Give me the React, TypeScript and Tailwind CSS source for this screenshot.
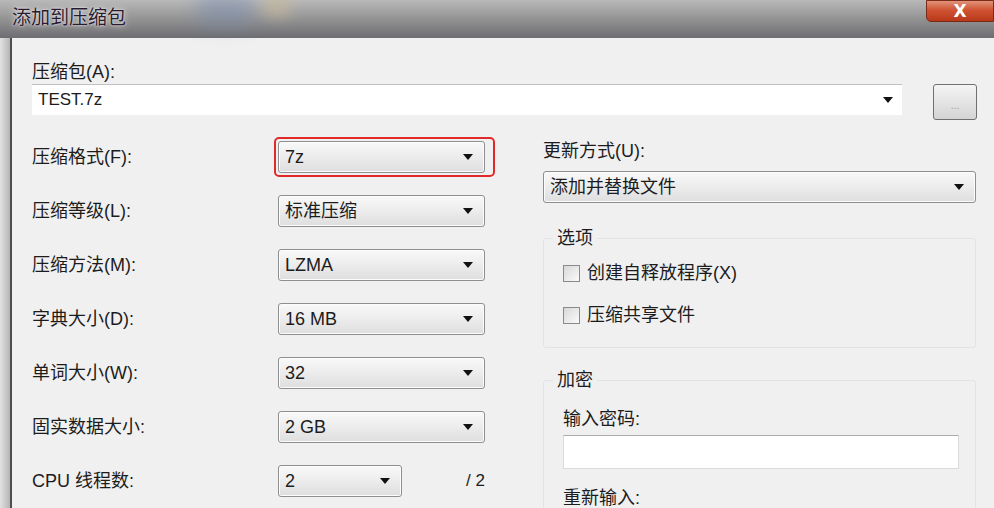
import React from "react";

const font = { fontFamily: '"Liberation Sans", "Noto Sans CJK SC", sans-serif' };

const Arrow = () => (
  <svg width="10" height="6" viewBox="0 0 10 6" className="shrink-0">
    <path d="M0 0h10L5 6z" fill="#111" />
  </svg>
);

const Select = ({
  value,
  className = "",
}: {
  value: string;
  className?: string;
}) => (
  <div
    className={`flex h-[32px] items-center justify-between rounded-[3px] border border-[#8d8f91] bg-[linear-gradient(#f9f9f9,#ececec_50%,#dedede)] pl-[6px] pr-[11px] text-[18px] text-[#1c1c1c] shadow-[inset_0_0_0_1px_#fcfcfc] ${className}`}
  >
    <span>{value}</span>
    <Arrow />
  </div>
);

const Checkbox = ({ label }: { label: string }) => (
  <label className="flex h-[42px] items-center gap-[7px] text-[18px] text-[#1c1c1c]">
    <span className="h-[17px] w-[17px] border border-[#8a8a8a] bg-[linear-gradient(135deg,#d8d8d8,#fafafa)]" />
    {label}
  </label>
);

const rows: Array<{ label: string; value: string; narrow?: boolean }> = [
  { label: "压缩格式(F):", value: "7z" },
  { label: "压缩等级(L):", value: "标准压缩" },
  { label: "压缩方法(M):", value: "LZMA" },
  { label: "字典大小(D):", value: "16 MB" },
  { label: "单词大小(W):", value: "32" },
  { label: "固实数据大小:", value: "2 GB" },
  { label: "CPU 线程数:", value: "2", narrow: true },
];

export default function App() {
  return (
    <div
      className="flex h-[508px] w-[994px] flex-col overflow-hidden bg-[#c4c6c8]"
      style={font}
    >
      {/* title bar */}
      <div className="relative flex h-[38px] shrink-0 items-center bg-[linear-gradient(#b9b9b9,#8f8f90_55%,#6d6d72)] pb-[2px] pl-[12px]">
        <span className="pointer-events-none absolute left-[195px] top-[-8px] h-[34px] w-[60px] rounded-full bg-[#6d86b0] opacity-40 blur-[10px]" />
        <span className="pointer-events-none absolute left-[262px] top-[-6px] h-[24px] w-[30px] rounded-full bg-[#cdbb96] opacity-50 blur-[7px]" />
        <span className="relative text-[19px] text-[#2a1a30] [text-shadow:0_0_6px_#e8e8e8,0_0_2px_#ffffff]">
          添加到压缩包
        </span>
        <div className="absolute right-0 top-0 flex h-[22px] w-[68px] items-center justify-center rounded-bl-[5px] border border-[#7c2a18] bg-[linear-gradient(#e29379,#cf5434_45%,#b83818)]">
          <span className="text-[17px] font-bold leading-none text-white" style={{ fontFamily: '"DejaVu Sans", sans-serif' }}>
            X
          </span>
        </div>
      </div>

      <div className="flex min-h-0 flex-1">
        {/* left frame */}
        <div className="w-[10px] shrink-0 bg-[linear-gradient(90deg,#e2e2e2,#b5b5b5)]" />
        <div className="w-[2px] shrink-0 bg-[#4e4e50]" />

        {/* dialog body */}
        <div className="flex-1 bg-[#f0f0f0] pl-[20px] pr-[17px] pt-[23px] text-[#1c1c1c]">
          <div className="text-[18px] leading-[22px]">压缩包(A):</div>
          <div className="mt-[1px] flex items-start gap-[31px]">
            <div className="flex h-[31px] w-[870px] items-center justify-between border-t border-[#bfc1c3] bg-white pl-[6px] pr-[9px] text-[17px]">
              <span>TEST.7z</span>
              <Arrow />
            </div>
            <div className="flex h-[36px] w-[44px] items-end justify-center rounded-[3px] border border-[#707070] bg-[linear-gradient(#f4f4f4,#e4e4e4_50%,#d4d4d4)] pb-[8px] text-[10px] leading-none text-[#9a9a9a]">
              ...
            </div>
          </div>

          <div className="flex">
            {/* left column */}
            <div className="mt-[10px] flex w-[461px] flex-col">
              {rows.map((r) => (
                <div key={r.label} className="flex h-[54px] items-center">
                  <span className="w-[246px] text-[18px]">{r.label}</span>
                  {r.narrow ? (
                    <>
                      <Select value={r.value} className="w-[124px]" />
                      <span className="ml-auto mr-[8px] text-[17px]">/ 2</span>
                    </>
                  ) : (
                    <div className={r.value === "7z" ? "rounded-[1px] pr-[6px] outline outline-2 outline-offset-[2px] outline-[#e02a2a]" : ""}>
                      <Select value={r.value} className="w-[207px]" />
                    </div>
                  )}
                </div>
              ))}
            </div>

            {/* right column */}
            <div className="ml-[50px] flex w-[433px] flex-col pt-[19px]">
              <div className="text-[18px] leading-[24px]">更新方式(U):</div>
              <Select value="添加并替换文件" className="mt-[8px] h-[32px] w-[433px]" />

              <div className="relative mt-[35px] h-[110px] rounded-[3px] border border-[#e1e3e5] pl-[19px] pt-[13px]">
                <span className="absolute left-[9px] top-[-13px] bg-[#f0f0f0] px-[4px] text-[18px] leading-[24px]">选项</span>
                <Checkbox label="创建自释放程序(X)" />
                <Checkbox label="压缩共享文件" />
              </div>

              <div className="relative mt-[32px] h-[140px] rounded-[3px] border border-[#e1e3e5] pl-[19px] pt-[26px]">
                <span className="absolute left-[9px] top-[-13px] bg-[#f0f0f0] px-[4px] text-[18px] leading-[24px]">加密</span>
                <div className="text-[18px] leading-[24px]">输入密码:</div>
                <div className="mt-[4px] h-[34px] w-[396px] border border-[#d9dbdd] border-t-[#a9abad] bg-white" />
                <div className="mt-[17px] text-[18px] leading-[24px]">重新输入:</div>
              </div>
            </div>
          </div>
        </div>
      </div>
    </div>
  );
}
